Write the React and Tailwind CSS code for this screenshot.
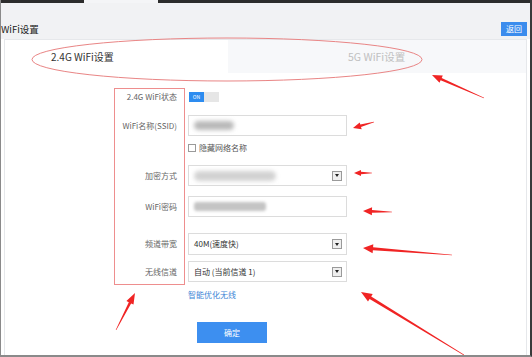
import React from "react";

function arrowPts(x1, y1, x2, y2, hl = 11, hw = 8, sw = 3, tw = 0.6) {
  const dx = x2 - x1, dy = y2 - y1;
  const L = Math.hypot(dx, dy);
  const ux = dx / L, uy = dy / L;
  const nx = -uy, ny = ux;
  const bx = x2 - ux * hl, by = y2 - uy * hl;
  const p = (x, y) => `${x.toFixed(1)},${y.toFixed(1)}`;
  return [
    p(x1 + nx * tw / 2, y1 + ny * tw / 2),
    p(bx + nx * sw / 2, by + ny * sw / 2),
    p(bx + nx * hw / 2, by + ny * hw / 2),
    p(x2, y2),
    p(bx - nx * hw / 2, by - ny * hw / 2),
    p(bx - nx * sw / 2, by - ny * sw / 2),
    p(x1 - nx * tw / 2, y1 - ny * tw / 2),
  ].join(" ");
}

const arrows = [
  [483, 98, 431, 75, 10, 8, 2.6],
  [373, 122, 352, 128, 8, 7, 2.6],
  [371, 173, 353, 173, 7, 6, 2.4],
  [391, 212, 362, 211, 9, 8, 2.8],
  [451, 255, 362, 248, 10, 9, 3],
  [463, 355, 360, 292, 11, 9, 3],
  [115, 330, 134, 293, 11, 8, 2.6],
];

function DropBox() {
  return (
    <div className="w-[10px] h-[10px] border border-[#9a9a9a] bg-[#efefef] flex items-center justify-center">
      <div className="w-0 h-0 border-l-[2.5px] border-r-[2.5px] border-t-[3px] border-l-transparent border-r-transparent border-t-[#222]" />
    </div>
  );
}

function Row({ label, h, mt, children }) {
  return (
    <div className={`flex items-center ${h} ${mt}`}>
      <div className="w-[70px] ml-[109px] pr-[7px] text-right text-[8px] text-[#666] whitespace-nowrap">{label}</div>
      <div className="ml-[4px] w-[160px] h-full flex items-center">{children}</div>
    </div>
  );
}

export default function App() {
  return (
    <div
      className="relative w-[532px] h-[357px] overflow-hidden bg-white border-l border-[#8a8a8a] border-r-2 border-r-[#3a3a3a] border-b-2 border-b-[#8a8a8a]"
      style={{ fontFamily: '"Microsoft YaHei", "Noto Sans CJK SC", "Noto Sans", sans-serif' }}
    >
      <div className="flex h-[3px]">
        <div className="w-[83px] bg-[#2c2c2c]" />
        <div className="w-[74px] bg-[#f4f5f7]" />
        <div className="flex-1 bg-[#2c2c2c]" />
      </div>
      <div className="h-[36px] bg-[#f1f2f4] flex items-end justify-between pb-[3px] pr-[3px]">
        <div className="ml-0 mb-0 text-[9.5px] text-[#222]">WiFi设置</div>
        <div className="w-[26px] h-[14px] bg-[#3b8ced] text-white text-[8px] flex items-center justify-center">返回</div>
      </div>
      <div className="mx-[3px] h-[320px] border border-[#e6e8eb] bg-white">
        <div className="flex h-[33px]">
          <div className="w-[223px] bg-white flex items-center pl-[46px] text-[10px] text-[#333]">2.4G WiFi设置</div>
          <div className="flex-1 bg-[#f7f8fa] flex items-center pl-[120px] text-[10.5px] text-[#c0c0c0]">5G WiFi设置</div>
        </div>

        <Row label="2.4G WiFi状态" h="h-[19px]" mt="mt-[14px]">
          <div className="ml-[1px] flex h-[10px] w-[30px]">
            <div className="w-[15px] bg-[#2d8cf0] text-white text-[5px] leading-[10px] text-center">ON</div>
            <div className="w-[15px] bg-[#e6e6e6]" />
          </div>
        </Row>

        <Row label="WiFi名称(SSID)" h="h-[21px]" mt="mt-[9px]">
          <div className="w-[159px] h-[21px] border border-[#dcdcdc] bg-white relative overflow-hidden">
            <div className="absolute left-[5px] top-[5px] w-[40px] h-[9px] rounded-full bg-[#b9b9b9] blur-[2px]" />
          </div>
        </Row>

        <div className="flex items-center h-[12px] mt-[6px] ml-[183px] text-[8px] text-[#555]">
          <div className="w-[8px] h-[8px] border border-[#9a9a9a] bg-white mr-[3px]" />
          隐藏网络名称
        </div>

        <Row label="加密方式" h="h-[21px]" mt="mt-[11px]">
          <div className="w-[159px] h-[21px] border border-[#dcdcdc] bg-white relative flex items-center justify-end pr-[4px] overflow-hidden">
            <div className="absolute left-[5px] top-[5px] w-[82px] h-[10px] rounded-full bg-[#d2d2d2] blur-[2px]" />
            <DropBox />
          </div>
        </Row>

        <Row label="WiFi密码" h="h-[21px]" mt="mt-[10px]">
          <div className="w-[159px] h-[21px] border border-[#dcdcdc] bg-white relative overflow-hidden">
            <div className="absolute left-[5px] top-[5px] w-[72px] h-[9px] rounded-[3px] bg-[#c4c4c4] blur-[1.5px]" />
          </div>
        </Row>

        <Row label="频道带宽" h="h-[22px]" mt="mt-[16px]">
          <div className="w-[159px] h-[22px] border border-[#dcdcdc] bg-white flex items-center justify-between pl-[5px] pr-[4px] text-[8px] text-[#333]">
            <span>40M(速度快)</span>
            <DropBox />
          </div>
        </Row>

        <Row label="无线信道" h="h-[21px]" mt="mt-[6px]">
          <div className="w-[159px] h-[21px] border border-[#dcdcdc] bg-white flex items-center justify-between pl-[5px] pr-[4px] text-[8px] text-[#333]">
            <span>自动 (当前信道 1)</span>
            <DropBox />
          </div>
        </Row>

        <div className="ml-[183px] mt-[7px] text-[8px] text-[#3d86d6]">智能优化无线</div>

        <div className="ml-[192px] mt-[21px] w-[70px] h-[21px] bg-[#3d8ff0] text-white text-[8px] flex items-center justify-center">确定</div>
      </div>

      <svg className="absolute left-0 top-0 pointer-events-none" width="532" height="357" viewBox="0 0 532 357">
        <ellipse cx="226" cy="59.5" rx="195" ry="21.5" fill="none" stroke="#e98585" strokeWidth="1" />
        <rect x="113.5" y="88.5" width="70" height="196" fill="none" stroke="#ee8e8e" strokeWidth="1" />
        {arrows.map((a, i) => (
          <polygon key={i} points={arrowPts(a[0], a[1], a[2], a[3], a[4], a[5], a[6])} fill="#f02424" />
        ))}
      </svg>
    </div>
  );
}
